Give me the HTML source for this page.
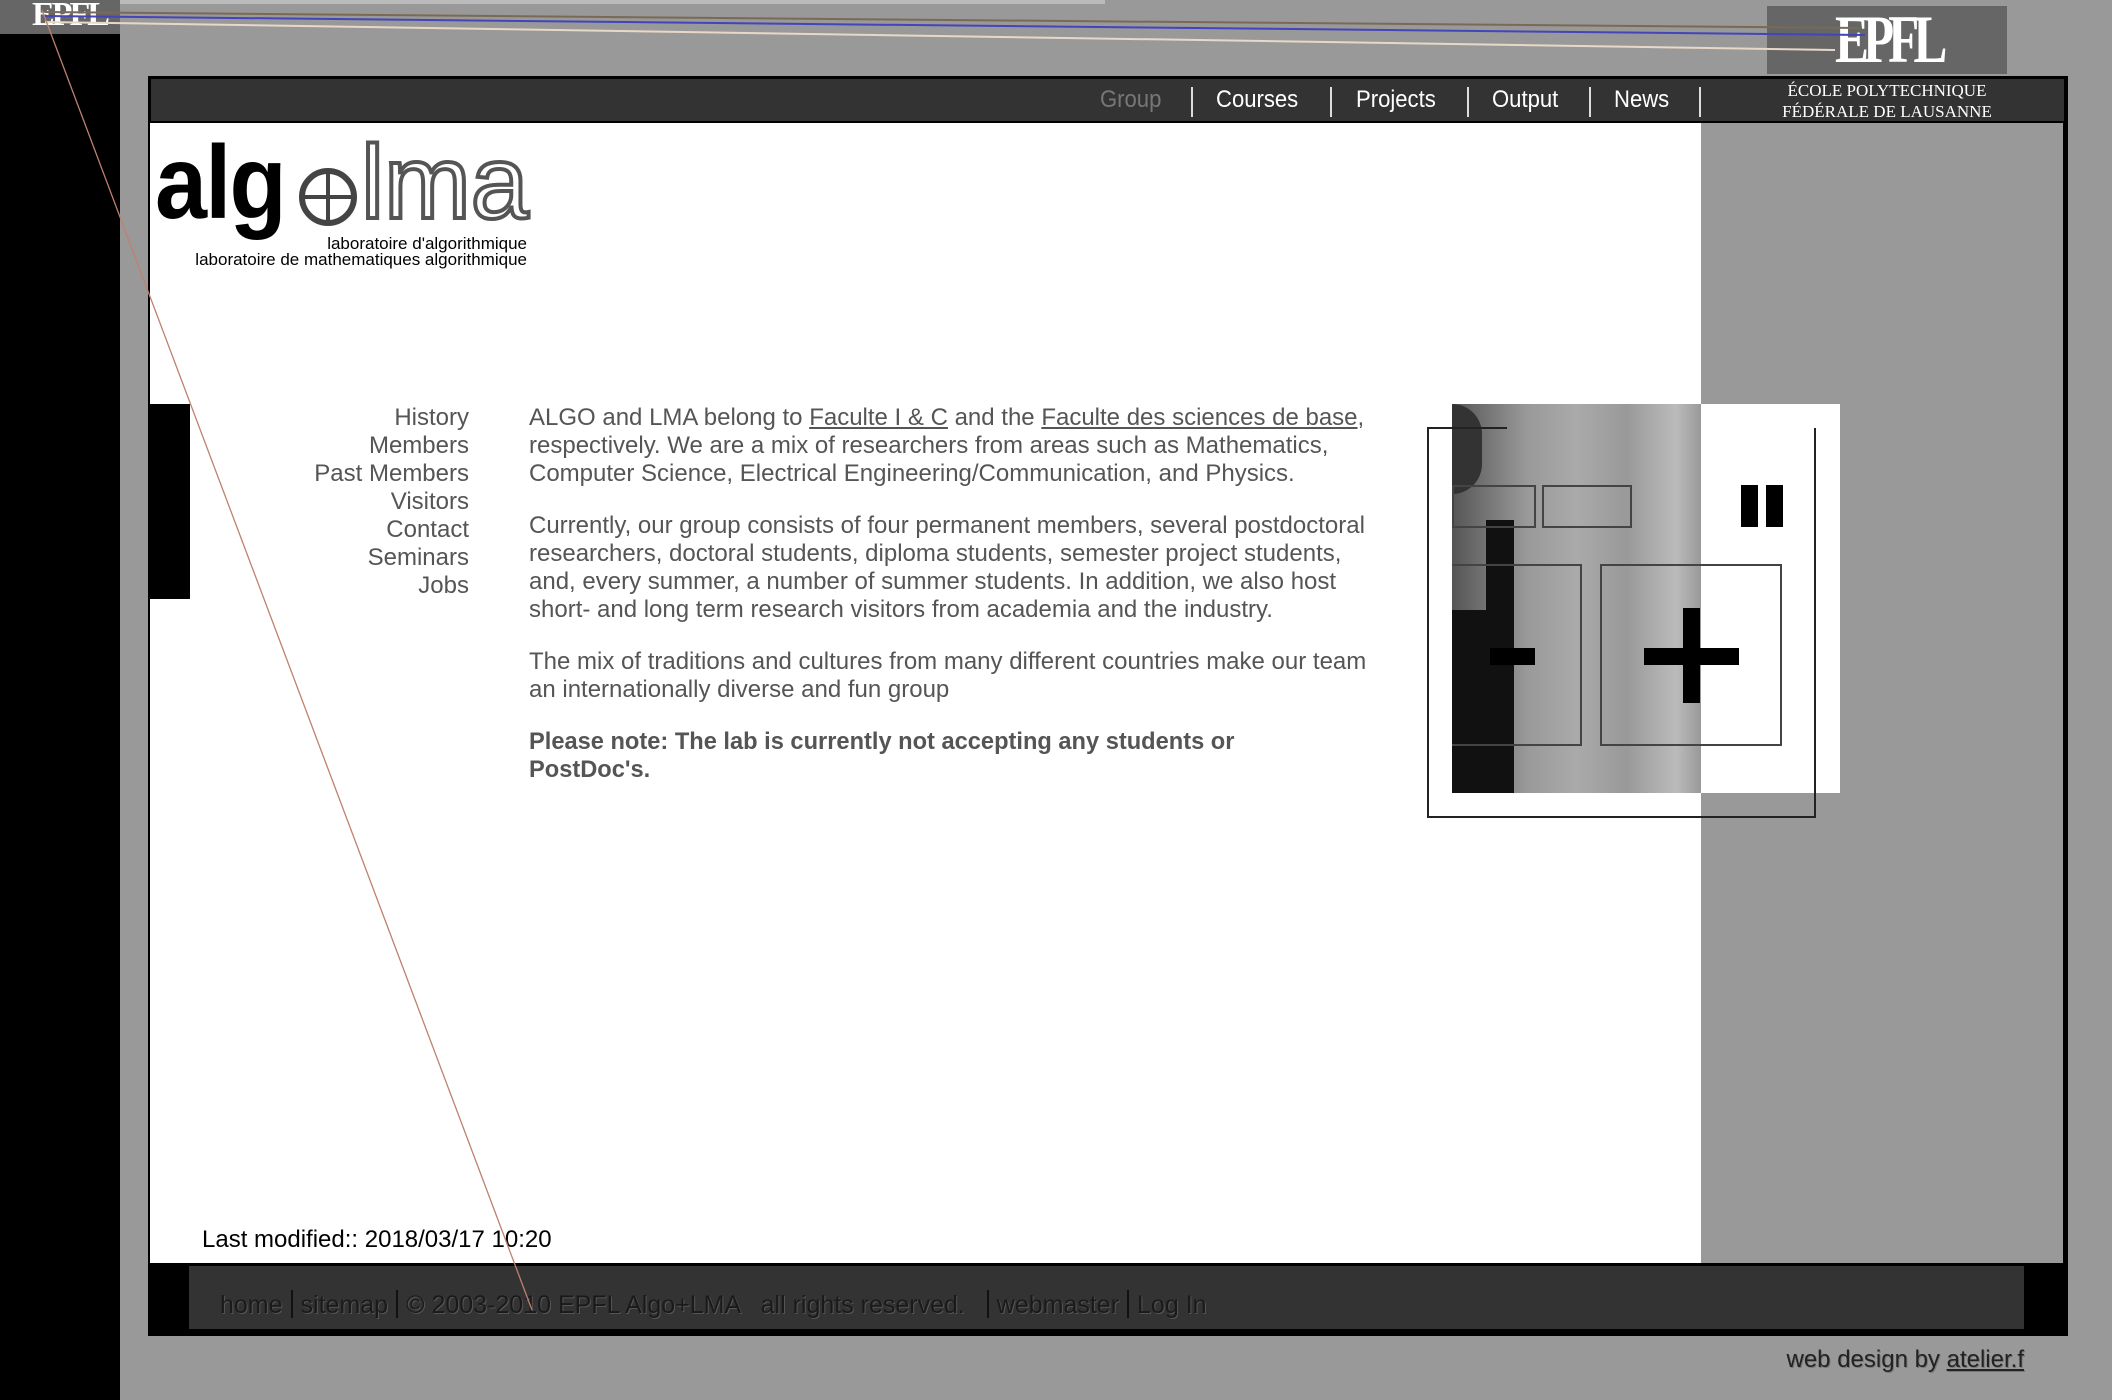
<!DOCTYPE html>
<html><head><meta charset="utf-8"><style>
*{margin:0;padding:0;box-sizing:border-box}
body{width:2112px;height:1400px;background:#999;position:relative;overflow:hidden;font-family:"Liberation Sans",Arial,sans-serif}
.a{position:absolute}
.t{color:#555;font-size:24px;line-height:28px;white-space:nowrap;transform-origin:0 0}
.nav{color:#fff;font-size:24px;top:86px;transform:scaleX(.92);transform-origin:0 0}
.sep{position:absolute;top:87px;width:2px;height:30px;background:#ddd}
u{text-decoration:underline}
.fs{display:inline-block;width:2px;height:28px;background:#111;vertical-align:-5px;margin:0 8px}
</style></head><body>
<div class="a" style="left:0;top:0;width:1105px;height:4px;background:#bbb"></div>
<div class="a" style="left:0;top:0;width:120px;height:34px;background:#666"></div>
<div class="a" style="left:0;top:34px;width:120px;height:1366px;background:#000"></div>
<div class="a" style="left:32px;top:0;width:52px;height:34px;color:#fff;font:bold 34px 'Liberation Serif',serif;line-height:30px;letter-spacing:-3px">EPFL</div>

<div class="a" style="left:148px;top:76px;width:1920px;height:1260px;background:#000"></div>
<div class="a" style="left:151px;top:79px;width:1913px;height:42px;background:#333"></div>
<div class="a" style="left:150px;top:123px;width:1551px;height:1140px;background:#fff"></div>
<div class="a" style="left:1701px;top:123px;width:362px;height:1140px;background:#999"></div>
<div class="a" style="left:189px;top:1266px;width:1835px;height:63px;background:#333"></div>

<div class="a nav" style="left:1100px;color:#777">Group</div>
<div class="sep" style="left:1191px"></div>
<div class="a nav" style="left:1216px">Courses</div>
<div class="sep" style="left:1330px"></div>
<div class="a nav" style="left:1356px">Projects</div>
<div class="sep" style="left:1467px"></div>
<div class="a nav" style="left:1492px">Output</div>
<div class="sep" style="left:1589px"></div>
<div class="a nav" style="left:1614px">News</div>
<div class="sep" style="left:1699px"></div>

<div class="a" style="left:1767px;top:6px;width:240px;height:68px;background:#666"></div>
<div class="a" style="left:1835px;top:4px;width:100px;height:70px;color:#fff;font:bold 68px 'Liberation Serif',serif;line-height:70px;letter-spacing:-8px;transform:scaleX(.75);transform-origin:0 0">EPFL</div>
<div class="a" style="left:1767px;top:80px;width:240px;color:#fff;font:17px 'Liberation Serif',serif;line-height:21px;text-align:center">ÉCOLE POLYTECHNIQUE<br>FÉDÉRALE DE LAUSANNE</div>

<!-- algolma logo -->
<div class="a" style="left:155px;top:128px;font-size:104px;font-weight:bold;color:#000;letter-spacing:-2px;line-height:110px;transform:scaleX(.9);transform-origin:0 0">alg</div>
<div class="a" style="left:299px;top:168px;width:58px;height:58px;border:6px solid #444;border-radius:50%;background:#fff"></div>
<div class="a" style="left:303px;top:195px;width:50px;height:4px;background:#444"></div>
<div class="a" style="left:326px;top:172px;width:4px;height:50px;background:#444"></div>
<div class="a" style="left:361px;top:128px;font-size:104px;color:#fff;-webkit-text-stroke:4px #555;line-height:110px">lma</div>
<div class="a" style="left:155px;top:236px;width:372px;text-align:right;font-size:17px;line-height:16px;color:#000">laboratoire d'algorithmique<br>laboratoire de mathematiques algorithmique</div>

<div class="a" style="left:148px;top:404px;width:42px;height:195px;background:#000"></div>

<div class="a t" style="left:300px;top:404px;width:169px;text-align:right">History<br>Members<br>Past Members<br>Visitors<br>Contact<br>Seminars<br>Jobs</div>

<div class="a t" style="left:529px;top:404px">ALGO and LMA belong to <u>Faculte I &amp; C</u> and the <u>Faculte des sciences de base</u>,<br>respectively. We are a mix of researchers from areas such as Mathematics,<br>Computer Science, Electrical Engineering/Communication, and Physics.</div>
<div class="a t" style="left:529px;top:512px">Currently, our group consists of four permanent members, several postdoctoral<br>researchers, doctoral students, diploma students, semester project students,<br>and, every summer, a number of summer students. In addition, we also host<br>short- and long term research visitors from academia and the industry.</div>
<div class="a t" style="left:529px;top:648px">The mix of traditions and cultures from many different countries make our team<br>an internationally diverse and fun group</div>
<div class="a t" style="left:529px;top:728px;font-weight:bold;transform:scaleX(.985)">Please note: The lab is currently not accepting any students or<br>PostDoc's.</div>

<div class="a" style="left:1452px;top:404px;width:388px;height:389px;background:#fff"></div>
<div class="a" style="left:1452px;top:404px;width:249px;height:389px;background:linear-gradient(90deg,#555 0,#777 15%,#999 30%,#aaa 50%,#999 70%,#bbb 90%,#999 100%)"></div>
<div class="a" style="left:1452px;top:404px;width:30px;height:90px;background:#333;border-radius:0 40px 40px 0"></div>
<div class="a" style="left:1486px;top:520px;width:28px;height:273px;background:#111"></div>
<div class="a" style="left:1452px;top:610px;width:52px;height:183px;background:#111"></div>
<div class="a" style="left:1427px;top:428px;width:389px;height:390px;border:2px solid #222;border-top:none;border-right:none"></div>
<div class="a" style="left:1427px;top:427px;width:80px;height:2px;background:#222"></div>
<div class="a" style="left:1814px;top:428px;width:2px;height:390px;background:#222"></div>
<div class="a" style="left:1452px;top:485px;width:84px;height:43px;border:2px solid #444"></div>
<div class="a" style="left:1542px;top:485px;width:90px;height:43px;border:2px solid #444"></div>
<div class="a" style="left:1452px;top:564px;width:130px;height:182px;border:2px solid #444;border-left:none"></div>
<div class="a" style="left:1600px;top:564px;width:182px;height:182px;border:2px solid #444"></div>
<div class="a" style="left:1741px;top:485px;width:17px;height:42px;background:#000"></div>
<div class="a" style="left:1766px;top:485px;width:17px;height:42px;background:#000"></div>
<div class="a" style="left:1644px;top:648px;width:95px;height:17px;background:#000"></div>
<div class="a" style="left:1683px;top:608px;width:17px;height:95px;background:#000"></div>
<div class="a" style="left:1490px;top:648px;width:45px;height:17px;background:#000"></div>

<div class="a" style="left:202px;top:1226px;font-size:24px;color:#000;white-space:nowrap">Last modified:: 2018/03/17 10:20</div>

<div class="a" style="left:220px;top:1290px;font-size:25px;color:#1a1a1a;white-space:nowrap;text-shadow:1px 1px 0 #555">home<span class="fs"></span>sitemap<span class="fs"></span>© 2003-2010 EPFL Algo+LMA &nbsp; all rights reserved. &nbsp;<span class="fs"></span>webmaster<span class="fs"></span>Log In</div>
<div class="a" style="left:1760px;top:1346px;width:264px;text-align:right;font-size:24px;color:#222;white-space:nowrap;text-shadow:1px 1px 0 #777">web design by <u>atelier.f</u></div>

<svg class="a" style="left:0;top:0" width="2112" height="1400">
<line x1="45" y1="12" x2="1860" y2="28" stroke="#7a6a55" stroke-width="2"/>
<line x1="45" y1="16" x2="1865" y2="35" stroke="#4444bb" stroke-width="2"/>
<line x1="45" y1="22" x2="1835" y2="50" stroke="#e8d8c8" stroke-width="2"/>
<line x1="42" y1="10" x2="532" y2="1310" stroke="#c08070" stroke-width="1.3"/>
</svg>
</body></html>
